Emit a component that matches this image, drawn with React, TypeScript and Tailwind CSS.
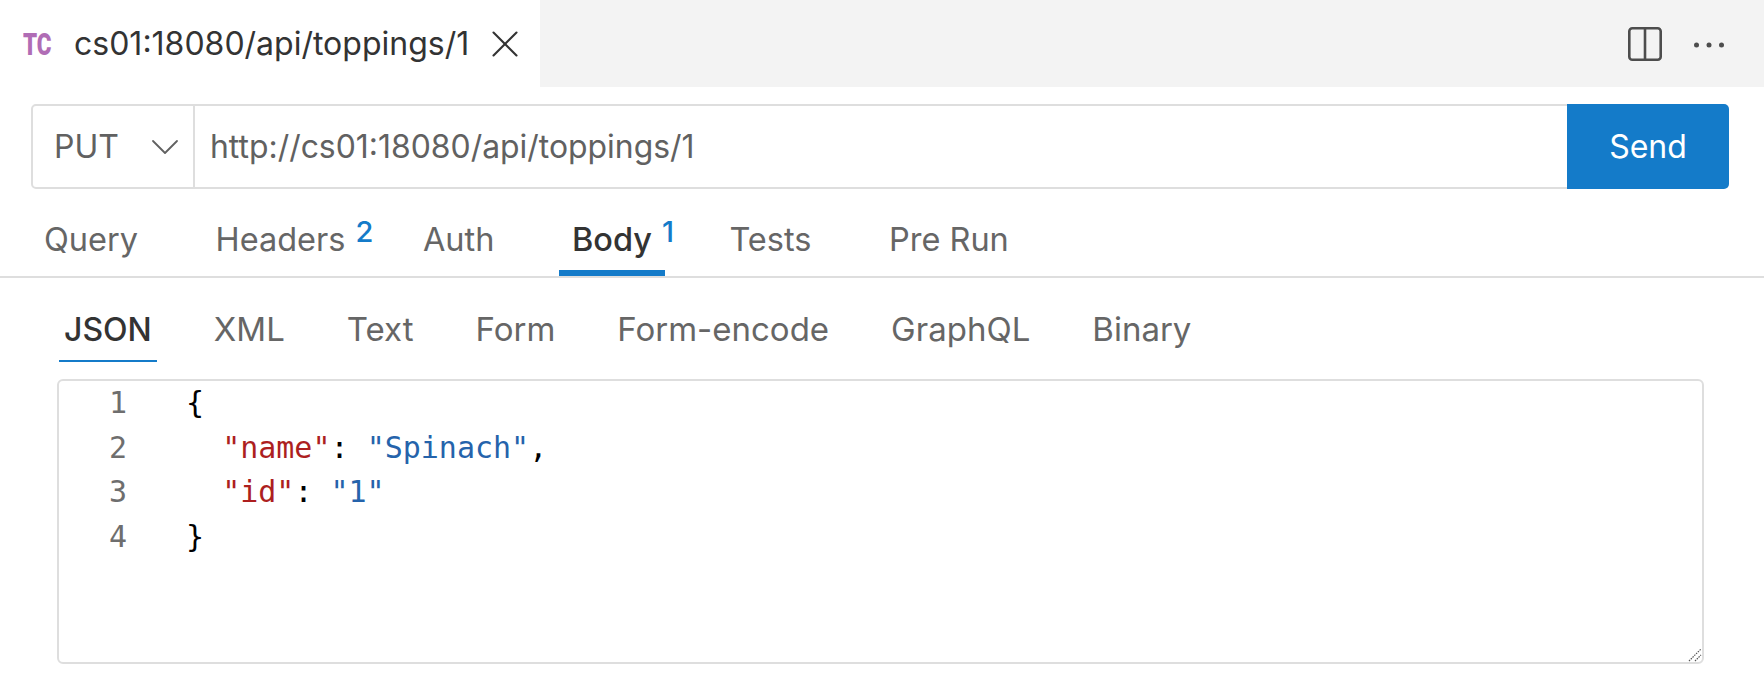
import { X, ChevronDown } from "lucide-react";

const mainTabs = [
  { label: "Query" },
  { label: "Headers", count: 2 },
  { label: "Auth" },
  { label: "Body", count: 1, active: true },
  { label: "Tests" },
  { label: "Pre Run" },
];

const bodyTabs = ["JSON", "XML", "Text", "Form", "Form-encode", "GraphQL", "Binary"];

const lineNumbers = [1, 2, 3, 4];

function SplitIcon() {
  return (
    <svg className="h-[34px] w-[34px]" viewBox="0 0 34 34" fill="none" stroke="#4d4d4d" strokeWidth="2.6">
      <rect x="1.3" y="1.3" width="31.4" height="31.4" rx="3" />
      <path d="M17 1.3 V32.7" />
    </svg>
  );
}

function MoreIcon() {
  return (
    <svg className="mt-[3px] h-[6px] w-[30px]" viewBox="0 0 30 6" fill="#4d4d4d">
      <circle cx="2.5" cy="3" r="2.5" />
      <circle cx="15" cy="3" r="2.5" />
      <circle cx="27.5" cy="3" r="2.5" />
    </svg>
  );
}

function Editor() {
  return (
    <div className="relative ml-[57px] mr-[60px] mt-[17px] flex h-[285px] rounded-[6px] border-2 border-[#dedede] font-['DejaVu_Sans_Mono',monospace] text-[30px] leading-[44.7px]">
      <div className="w-[68px] text-right text-[#6e6e6e]">
        {lineNumbers.map((n) => (
          <div key={n}>{n}</div>
        ))}
      </div>
      <div className="ml-[59px] whitespace-pre text-black">
        <div>{"{"}</div>
        <div>
          {"  "}
          <span className="text-[#ad1f1f]">"name"</span>: <span className="text-[#2563ab]">"Spinach"</span>,
        </div>
        <div>
          {"  "}
          <span className="text-[#ad1f1f]">"id"</span>: <span className="text-[#2563ab]">"1"</span>
        </div>
        <div>{"}"}</div>
      </div>
      <svg className="absolute bottom-0 right-0 h-[14px] w-[14px]" viewBox="0 0 14 14">
        <path d="M1 13 L13 1 M7 13 L13 7" stroke="#555" strokeWidth="1.2" strokeDasharray="1.5 1" fill="none" />
      </svg>
    </div>
  );
}

export default function App() {
  return (
    <div className="h-[677px] w-[1764px] bg-white font-['Inter',sans-serif] text-[32px] text-[#666666]">
      <div className="flex h-[87px] bg-[#f3f3f3]">
        <div className="flex w-[540px] items-center bg-white pl-[23px] text-[#333333]">
          <span className="w-[29px] origin-left scale-x-[0.7] font-['Roboto',sans-serif] text-[32px] font-black text-[#b06db5]">
            TC
          </span>
          <span className="ml-[22px]">cs01:18080/api/toppings/1</span>
          <X className="ml-[13px] h-[46px] w-[46px] text-[#333333]" strokeWidth={1.1} />
        </div>
        <div className="ml-auto flex items-center gap-[32px] pr-[40px]">
          <SplitIcon />
          <MoreIcon />
        </div>
      </div>

      <div className="ml-[31px] mr-[35px] mt-[17px] flex h-[85px]">
        <div className="flex w-[164px] items-center rounded-l-[5px] border-2 border-[#dedede] pl-[21px] text-[#616161]">
          <span>PUT</span>
          <ChevronDown className="ml-[22px] h-[48px] w-[48px]" strokeWidth={0.9} />
        </div>
        <div className="flex flex-1 items-center border-y-2 border-[#dedede] pl-[15px] text-[31.9px] text-[#616161]">
          http://cs01:18080/api/toppings/1
        </div>
        <button className="w-[162px] rounded-r-[5px] bg-[#147bc9] text-white">Send</button>
      </div>

      <div className="flex h-[89px] gap-[51.5px] border-b-2 border-[#dedede] pl-[31px] text-[32.5px]">
        {mainTabs.map((tab) => (
          <div
            key={tab.label}
            className={`relative flex items-center border-b-[6px] px-[13px] pt-[21px] ${
              tab.active ? "border-[#147bc9] font-medium text-[#333333]" : "border-transparent"
            }`}
          >
            {tab.label}
            {tab.count && (
              <span className="absolute left-full top-[25px] -ml-[3px] text-[29px] font-medium leading-[35px] text-[#147bc9]">
                {tab.count}
              </span>
            )}
          </div>
        ))}
      </div>

      <div className="flex h-[84px] gap-[52px] pl-[59px] pt-[2px] text-[33px]">
        {bodyTabs.map((tab) => (
          <div
            key={tab}
            className={`flex items-center border-b-2 px-[5px] pt-[20px] ${
              tab === "JSON" ? "border-[#147bc9] text-[32px] font-medium text-[#333333]" : "border-transparent"
            }`}
          >
            {tab}
          </div>
        ))}
      </div>

      <Editor />
    </div>
  );
}
